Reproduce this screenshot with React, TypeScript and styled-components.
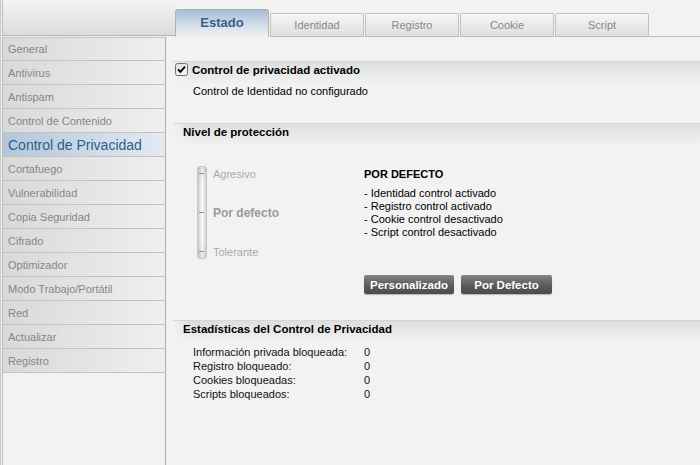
import React from "react";
import styled, { createGlobalStyle, css } from "styled-components";

const Global = createGlobalStyle`
  html, body { margin: 0; padding: 0; background: #f2f2f2; }
  body { font-family: "Liberation Sans", Arial, sans-serif; font-size: 11px; color: #000; }
`;

const Page = styled.div`
  width: 700px;
  height: 465px;
  overflow: hidden;
  background: #f2f2f2;
  display: grid;
  grid-template-rows: 37px 1fr;
  box-shadow: inset 1px 0 0 #c9c9c9;
`;

const Header = styled.div`
  display: flex;
  align-items: flex-end;
`;

const HeaderLeft = styled.div`
  align-self: flex-start;
  box-sizing: border-box;
  width: 173px;
  height: 36px;
  margin-left: 2px;
  border-left: 1px solid #bdbdbd;
  border-bottom: 1px solid #b4b4b4;
  background: linear-gradient(#f4f4f4, #dcdcdc);
`;

const ActiveTab = styled.div`
  box-sizing: border-box;
  width: 94px;
  height: 28px;
  border: 1px solid #b2b2b2;
  border-bottom: none;
  border-radius: 3px 3px 0 0;
  background: linear-gradient(#a7bdd5, #d9e3ed 65%, #eef1f4);
  color: #3b5e8a;
  font-size: 13px;
  font-weight: bold;
  display: flex;
  align-items: center;
  justify-content: center;
  padding-bottom: 2px;
`;

const Tab = styled.div`
  box-sizing: border-box;
  width: 94px;
  height: 24px;
  margin-left: 1px;
  border: 1px solid #c2c2c2;
  border-bottom-color: #bcbcbc;
  border-radius: 2px 2px 0 0;
  background: linear-gradient(#f6f6f6, #dedede);
  color: #888888;
  font-size: 11px;
  display: flex;
  align-items: center;
  justify-content: center;
`;

const TabFiller = styled.div`
  flex: 1;
  align-self: stretch;
  border-bottom: 1px solid #bcbcbc;
`;

const Body = styled.div`
  display: grid;
  grid-template-columns: 166px 1fr;
  min-height: 0;
`;

const Sidebar = styled.nav`
  box-sizing: border-box;
  margin-left: 2px;
  border-left: 1px solid #bdbdbd;
  border-right: 1px solid #b0b0b0;
  display: flex;
  flex-direction: column;
`;

const NavItem = styled.div<{ $active?: boolean }>`
  box-sizing: border-box;
  height: 24px;
  flex: none;
  border-bottom: 1px solid #c2c2c2;
  padding-left: 5px;
  display: flex;
  align-items: center;
  font-size: 11px;
  color: #868686;
  background: linear-gradient(to right, #d9d9d9, #efefef);
  &:first-child {
    border-top: 1px solid #c2c2c2;
  }
  ${(p) =>
    p.$active &&
    css`
      font-size: 14px;
      color: #2f5d8c;
      background: linear-gradient(to right, #b3c6db, #e3eaf2);
    `}
`;

const Content = styled.div`
  display: flex;
  flex-direction: column;
  padding-top: 24px;
`;

const Band = styled.div<{ $tight?: boolean; $gap?: number }>`
  box-sizing: border-box;
  margin-left: 7px;
  margin-top: ${(p) => p.$gap ?? 0}px;
  height: 23px;
  border-top: 1px solid #d6d6d6;
  padding: 1px 0 0 ${(p) => (p.$tight ? 2 : 10)}px;
  display: flex;
  align-items: flex-start;
  gap: 4px;
  line-height: 13px;
  font-size: 11.5px;
  font-weight: bold;
  color: #000;
  background: linear-gradient(to right, #f2f2f2, rgba(242, 242, 242, 0) 16px),
    linear-gradient(#dedede, #f2f2f2);
`;

const BandText = styled.span`
  padding-top: 1px;
`;

const Note = styled.div`
  padding-left: 27px;
  padding-top: 1px;
  line-height: 13px;
  font-size: 11px;
`;

const Protection = styled.div`
  display: grid;
  grid-template-columns: 167px 1fr;
  padding-left: 31px;
  margin-top: 20px;
`;

const SliderWrap = styled.div`
  display: flex;
  gap: 6px;
`;

const Track = styled.div`
  box-sizing: border-box;
  width: 10px;
  height: 93px;
  border: 1px solid #c6c6c6;
  border-radius: 3px;
  padding: 6px 0 6px 1px;
  display: flex;
  flex-direction: column;
  justify-content: space-between;
  background: linear-gradient(rgba(0, 0, 0, 0.07), rgba(0, 0, 0, 0) 18%, rgba(0, 0, 0, 0) 82%, rgba(0, 0, 0, 0.07)),
    linear-gradient(to right, #cdcdcd, #fbfbfb 55%, #d2d2d2);
`;

const Tick = styled.span`
  width: 5px;
  height: 1px;
  background: #8e8e8e;
`;

const Levels = styled.div`
  height: 93px;
  box-sizing: border-box;
  padding-top: 1px;
  display: flex;
  flex-direction: column;
  justify-content: space-between;
`;

const Level = styled.span<{ $current?: boolean }>`
  line-height: 14px;
  font-size: ${(p) => (p.$current ? 12 : 11)}px;
  font-weight: ${(p) => (p.$current ? "bold" : "normal")};
  color: ${(p) => (p.$current ? "#9a9a9a" : "#aaaaaa")};
`;

const Detail = styled.div`
  padding-top: 2px;
  display: flex;
  flex-direction: column;
`;

const DetailTitle = styled.div`
  font-weight: bold;
  font-size: 11px;
  line-height: 13px;
`;

const DetailList = styled.div`
  margin-top: 6px;
  line-height: 13px;
  font-size: 11px;
`;

const Buttons = styled.div`
  margin-top: 36px;
  display: flex;
  gap: 7px;
`;

const Button = styled.button<{ $w: number }>`
  box-sizing: border-box;
  width: ${(p) => p.$w}px;
  height: 19px;
  padding: 0;
  border: none;
  border-radius: 2px;
  background: linear-gradient(#858585, #5a5a5a 55%, #4c4c4c);
  box-shadow: 0 1px 1px rgba(0, 0, 0, 0.25);
  color: #fff;
  font-family: "Liberation Sans", Arial, sans-serif;
  font-size: 11.5px;
  font-weight: bold;
`;

const Stats = styled.div`
  margin-top: 2px;
  padding-left: 27px;
  display: grid;
  grid-template-columns: 171px auto;
  justify-content: start;
  line-height: 14px;
  font-size: 11px;
  color: #111;
`;

const Check = () => (
  <svg width="13" height="13" viewBox="0 0 13 13" style={{ flex: "none" }}>
    <defs>
      <linearGradient id="cb" x1="0" y1="0" x2="1" y2="1">
        <stop offset="0" stopColor="#dcdcdc" />
        <stop offset="1" stopColor="#fafafa" />
      </linearGradient>
    </defs>
    <rect x="0.5" y="0.5" width="12" height="12" rx="2" fill="url(#cb)" stroke="#6f6f6f" />
    <path d="M3 6.3 L5.4 8.8 L10 3.6" fill="none" stroke="#000" strokeWidth="1.9" />
  </svg>
);

const navItems = [
  "General",
  "Antivirus",
  "Antispam",
  "Control de Contenido",
  "Control de Privacidad",
  "Cortafuego",
  "Vulnerabilidad",
  "Copia Seguridad",
  "Cifrado",
  "Optimizador",
  "Modo Trabajo/Portátil",
  "Red",
  "Actualizar",
  "Registro",
];

const tabs = ["Identidad", "Registro", "Cookie", "Script"];

const stats: [string, string][] = [
  ["Información privada bloqueada:", "0"],
  ["Registro bloqueado:", "0"],
  ["Cookies bloqueadas:", "0"],
  ["Scripts bloqueados:", "0"],
];

export default function App() {
  return (
    <>
      <Global />
      <Page>
        <Header>
          <HeaderLeft />
          <ActiveTab>Estado</ActiveTab>
          {tabs.map((t) => (
            <Tab key={t}>{t}</Tab>
          ))}
          <TabFiller />
        </Header>
        <Body>
          <Sidebar>
            {navItems.map((n) => (
              <NavItem key={n} $active={n === "Control de Privacidad"}>
                {n}
              </NavItem>
            ))}
          </Sidebar>
          <Content>
            <Band $tight>
              <Check />
              <BandText>Control de privacidad activado</BandText>
            </Band>
            <Note>Control de Identidad no configurado</Note>
            <Band $gap={25}>
              <BandText>Nivel de protección</BandText>
            </Band>
            <Protection>
              <SliderWrap>
                <Track>
                  <Tick />
                  <Tick />
                  <Tick />
                </Track>
                <Levels>
                  <Level>Agresivo</Level>
                  <Level $current>Por defecto</Level>
                  <Level>Tolerante</Level>
                </Levels>
              </SliderWrap>
              <Detail>
                <DetailTitle>POR DEFECTO</DetailTitle>
                <DetailList>
                  <div>- Identidad control activado</div>
                  <div>- Registro control activado</div>
                  <div>- Cookie control desactivado</div>
                  <div>- Script control desactivado</div>
                </DetailList>
                <Buttons>
                  <Button $w={90}>Personalizado</Button>
                  <Button $w={91}>Por Defecto</Button>
                </Buttons>
              </Detail>
            </Protection>
            <Band $gap={26}>
              <BandText>Estadísticas del Control de Privacidad</BandText>
            </Band>
            <Stats>
              {stats.map(([k, v]) => (
                <React.Fragment key={k}>
                  <span>{k}</span>
                  <span>{v}</span>
                </React.Fragment>
              ))}
            </Stats>
          </Content>
        </Body>
      </Page>
    </>
  );
}
